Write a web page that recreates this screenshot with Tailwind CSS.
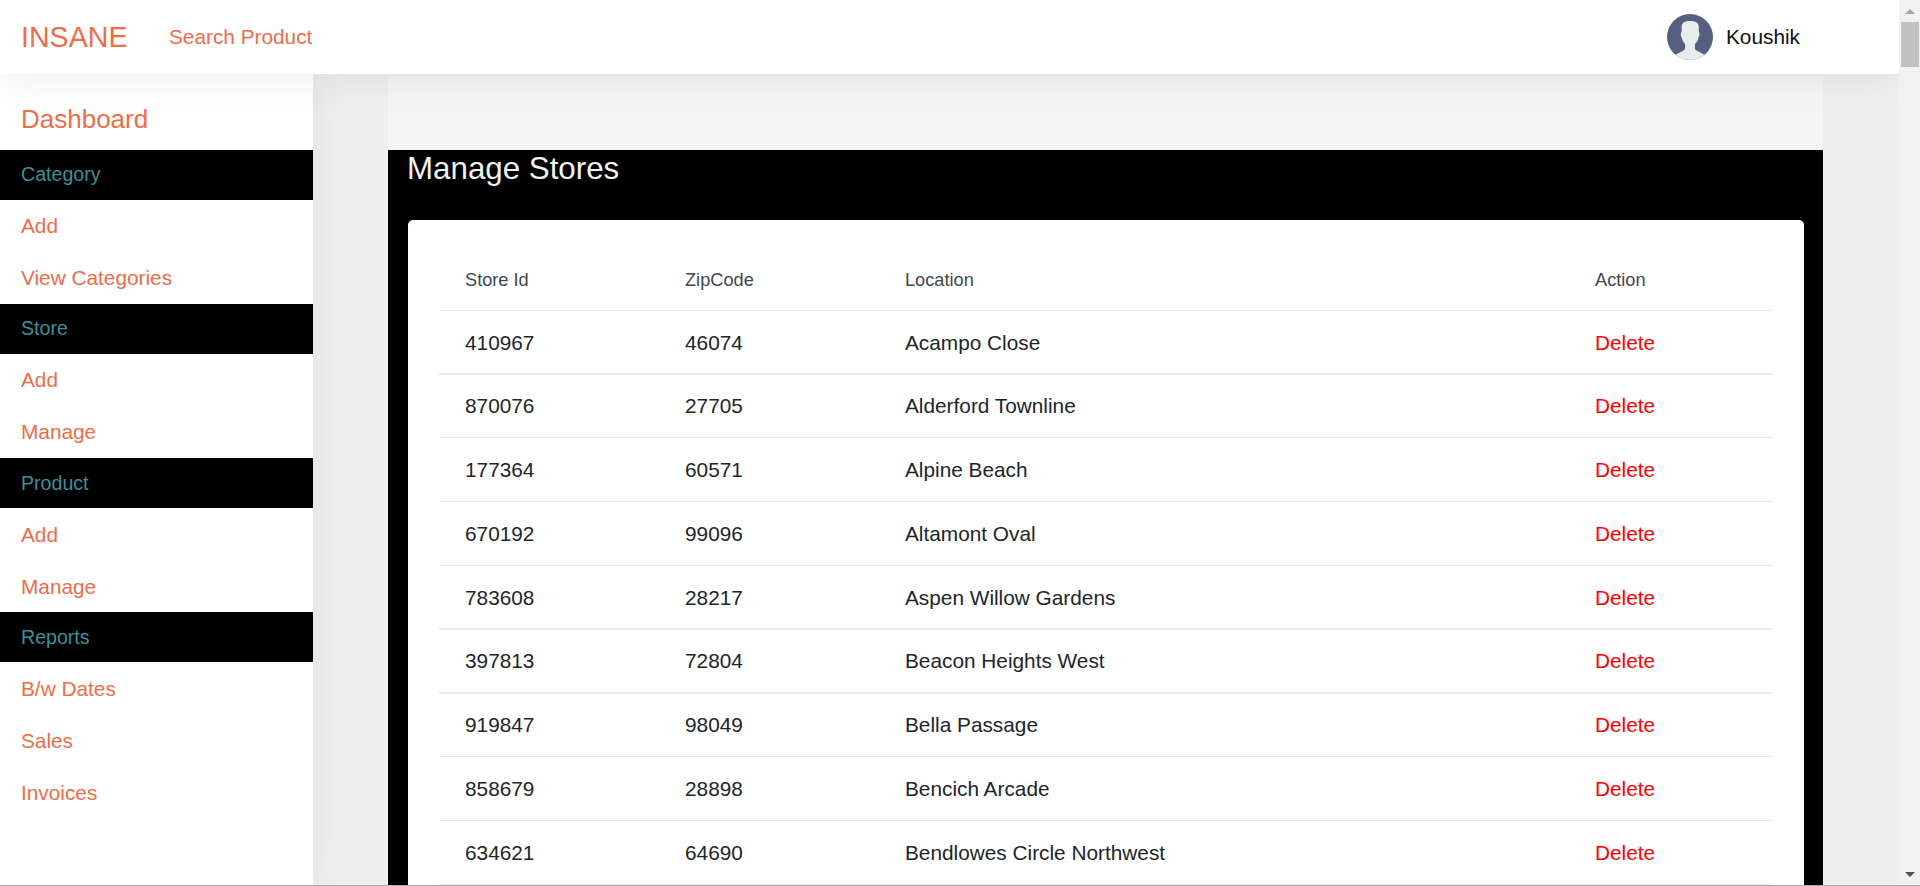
<!DOCTYPE html>
<html lang="en">
<head>
<meta charset="utf-8">
<title>Manage Stores</title>
<script src="https://cdn.jsdelivr.net/npm/@tailwindcss/browser@4"></script>
</head>
<body class="flex h-[886px] w-[1920px] flex-col overflow-hidden bg-[#efefef] font-['Liberation_Sans',Arial,sans-serif] text-[20.8px]">
<div class="flex h-[885px] w-full">
  <div class="flex w-[1899px] flex-col overflow-hidden">
    <header class="relative z-20 flex h-[74px] shrink-0 items-center bg-white pl-[21px] text-[#ec6d49] shadow-[0_10px_38px_rgba(0,0,0,0.06)]">
      <a class="w-[148px] text-[28.6px] leading-[74px]">INSANE</a>
      <a class="leading-[74px]">Search Product</a>
      <div class="mr-[99px] ml-auto flex items-center gap-[13px] text-[#111]">
        <svg class="size-[46px]" viewBox="0 0 46 46"><defs><clipPath id="face"><circle cx="23" cy="23" r="23"/></clipPath></defs><g clip-path="url(#face)"><path fill="#556080" d="M0 0h46v46H0z"/><path fill="#e7eced" d="M14.600 13C14.600 8.500 18 7 23 7s8.800 1.500 8.800 6v5c1 .5.900 4-.3 5.500-.5 3-1.800 5-3.600 6.500v4c0 1.500 1 2.200 2.500 3l7.500 4V48H8v-7l7.500-4c1.500-.8 2.600-1.500 2.600-3v-4c-1.800-1.700-3-4-3.400-6.500-1.200-1.500-1.100-5-.1-5.500z"/></g></svg>
        <span>Koushik</span>
      </div>
    </header>
    <div class="flex min-h-0 flex-1">
      <nav class="relative z-10 w-[313px] shrink-0 bg-white text-[#ec6d49] shadow-[0_0_38px_rgba(0,0,0,0.07)]">
        <a class="block h-[76px] pt-[29px] pl-[21px] text-[26px] leading-[32px]">Dashboard</a>
        <h3 class="h-[50px] bg-black pt-[12px] pl-[21px] text-[19.6px] leading-[24px] text-[#3f8f9b]">Category</h3>
        <a class="block h-[52px] pt-[14px] pl-[21px] leading-[24px]">Add</a>
        <a class="block h-[52px] pt-[14px] pl-[21px] leading-[24px]">View Categories</a>
        <h3 class="h-[50px] bg-black pt-[12px] pl-[21px] text-[19.6px] leading-[24px] text-[#3f8f9b]">Store</h3>
        <a class="block h-[52px] pt-[14px] pl-[21px] leading-[24px]">Add</a>
        <a class="block h-[52px] pt-[14px] pl-[21px] leading-[24px]">Manage</a>
        <h3 class="h-[50px] bg-black pt-[13px] pl-[21px] text-[19.6px] leading-[24px] text-[#3f8f9b]">Product</h3>
        <a class="block h-[52px] pt-[15px] pl-[21px] leading-[24px]">Add</a>
        <a class="block h-[52px] pt-[15px] pl-[21px] leading-[24px]">Manage</a>
        <h3 class="h-[50px] bg-black pt-[13px] pl-[21px] text-[19.6px] leading-[24px] text-[#3f8f9b]">Reports</h3>
        <a class="block h-[52px] pt-[15px] pl-[21px] leading-[24px]">B/w Dates</a>
        <a class="block h-[52px] pt-[15px] pl-[21px] leading-[24px]">Sales</a>
        <a class="block h-[52px] pt-[15px] pl-[21px] leading-[24px]">Invoices</a>
      </nav>
      <main class="ml-[75px] flex w-[1435px] flex-col">
        <div class="h-[76px] shrink-0 border-t-2 border-[#efefef] bg-[#f5f5f5]"></div>
        <section class="flex-1 bg-black pr-[19px] pl-[20px]">
          <h1 class="-ml-px h-[70px] text-[31.3px] leading-[37px] text-[#f1f1f1]">Manage Stores</h1>
          <div class="h-[665px] rounded-t-[5px] bg-white pr-[31px] pl-[31px] text-[#212529]">
            <div class="grid h-[91px] grid-cols-[220px_220px_690px_1fr] border-b border-[#e9e9e9] pt-[49px] pl-[26px] text-[18.2px] leading-[22px] text-[#3f474e]"><span>Store Id</span><span>ZipCode</span><span>Location</span><span>Action</span></div>
            <div class="grid h-[63px] grid-cols-[220px_220px_690px_1fr] border-b border-[#e9e9e9] pt-[20px] pl-[26px] leading-[24px]"><span>410967</span><span>46074</span><span>Acampo Close</span><a class="text-[#ff0000]">Delete</a></div>
            <div class="grid h-[64px] grid-cols-[220px_220px_690px_1fr] border-y border-[#e9e9e9] pt-[19px] pl-[26px] leading-[24px]"><span>870076</span><span>27705</span><span>Alderford Townline</span><a class="text-[#ff0000]">Delete</a></div>
            <div class="grid h-[64px] grid-cols-[220px_220px_690px_1fr] border-b border-[#e9e9e9] pt-[20px] pl-[26px] leading-[24px]"><span>177364</span><span>60571</span><span>Alpine Beach</span><a class="text-[#ff0000]">Delete</a></div>
            <div class="grid h-[64px] grid-cols-[220px_220px_690px_1fr] border-b border-[#e9e9e9] pt-[20px] pl-[26px] leading-[24px]"><span>670192</span><span>99096</span><span>Altamont Oval</span><a class="text-[#ff0000]">Delete</a></div>
            <div class="grid h-[63px] grid-cols-[220px_220px_690px_1fr] border-b border-[#e9e9e9] pt-[20px] pl-[26px] leading-[24px]"><span>783608</span><span>28217</span><span>Aspen Willow Gardens</span><a class="text-[#ff0000]">Delete</a></div>
            <div class="grid h-[64px] grid-cols-[220px_220px_690px_1fr] border-y border-[#e9e9e9] pt-[19px] pl-[26px] leading-[24px]"><span>397813</span><span>72804</span><span>Beacon Heights West</span><a class="text-[#ff0000]">Delete</a></div>
            <div class="grid h-[64px] grid-cols-[220px_220px_690px_1fr] border-y border-[#e9e9e9] pt-[19px] pl-[26px] leading-[24px]"><span>919847</span><span>98049</span><span>Bella Passage</span><a class="text-[#ff0000]">Delete</a></div>
            <div class="grid h-[64px] grid-cols-[220px_220px_690px_1fr] border-b border-[#e9e9e9] pt-[20px] pl-[26px] leading-[24px]"><span>858679</span><span>28898</span><span>Bencich Arcade</span><a class="text-[#ff0000]">Delete</a></div>
            <div class="grid h-[64px] grid-cols-[220px_220px_690px_1fr] border-b border-[#e9e9e9] pt-[20px] pl-[26px] leading-[24px]"><span>634621</span><span>64690</span><span>Bendlowes Circle Northwest</span><a class="text-[#ff0000]">Delete</a></div>
          </div>
        </section>
      </main>
    </div>
  </div>
  <div class="flex w-[21px] flex-col items-center bg-[#f1f1f1] pt-[9px] pb-[8px]">
    <svg class="h-[5px] w-[10px] shrink-0" viewBox="0 0 10 5"><path fill="#a3a3a3" d="M5 0l5 5H0z"/></svg>
    <div class="mt-[8px] h-[45px] w-[18px] bg-[#c1c1c1]"></div>
    <svg class="mt-auto h-[5px] w-[10px] shrink-0" viewBox="0 0 10 5"><path fill="#505050" d="M0 0h10L5 5z"/></svg>
  </div>
</div>
<div class="h-px w-full bg-[#acacac]"></div>
</body>
</html>
